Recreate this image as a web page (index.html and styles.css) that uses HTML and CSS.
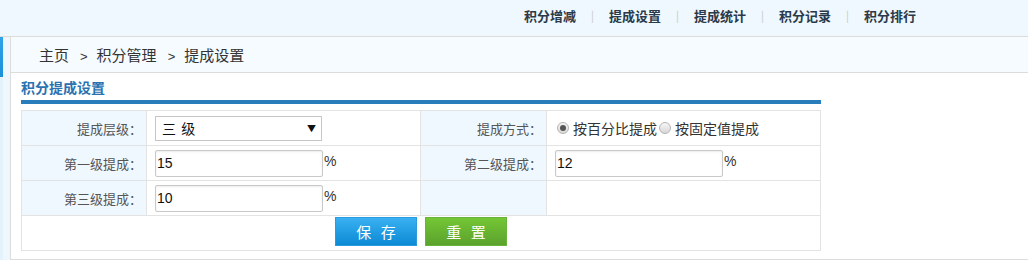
FILE: index.html
```html
<!DOCTYPE html>
<html lang="zh">
<head>
<meta charset="utf-8">
<title>提成设置</title>
<link rel="stylesheet" href="styles.css">
</head>
<body>
<div class="topbar">
  <nav class="nav">
    <a class="nav-item">积分增减</a><span class="sep">|</span>
    <a class="nav-item">提成设置</a><span class="sep">|</span>
    <a class="nav-item">提成统计</a><span class="sep">|</span>
    <a class="nav-item">积分记录</a><span class="sep">|</span>
    <a class="nav-item">积分排行</a>
  </nav>
</div>
<div class="main">
  <div class="gutter"><div class="gutter-bar"></div></div>
  <div class="panel">
    <div class="crumbs">主页<span class="gt">&gt;</span>积分管理<span class="gt">&gt;</span>提成设置</div>
    <div class="content">
      <div class="title">积分提成设置</div>
      <div class="rule"></div>
      <table class="form">
        <colgroup>
          <col class="c-lbl1"><col class="c-val1"><col class="c-lbl2"><col class="c-val2">
        </colgroup>
        <tr>
          <td class="lbl">提成层级：</td>
          <td class="val">
            <div class="select"><span class="sel-text">三 级</span><span class="arrow">▼</span></div>
          </td>
          <td class="lbl">提成方式：</td>
          <td class="val">
            <label class="radio"><span class="dot on"></span>按百分比提成</label><label class="radio"><span class="dot"></span>按固定值提成</label>
          </td>
        </tr>
        <tr>
          <td class="lbl">第一级提成：</td>
          <td class="val"><span class="input">15</span><span class="pct">%</span></td>
          <td class="lbl">第二级提成：</td>
          <td class="val"><span class="input">12</span><span class="pct">%</span></td>
        </tr>
        <tr>
          <td class="lbl">第三级提成：</td>
          <td class="val"><span class="input">10</span><span class="pct">%</span></td>
          <td class="lbl"></td>
          <td class="val"></td>
        </tr>
        <tr>
          <td class="actions" colspan="4">
            <div class="btns"><span class="btn blue">保 存</span><span class="btn green">重 置</span></div>
          </td>
        </tr>
      </table>
    </div>
  </div>
</div>
</body>
</html>
```
FILE: styles.css
```css
html, body { margin: 0; padding: 0; background: #fff; }
body {
  font-family: "Noto Sans CJK SC", "Liberation Sans", sans-serif;
  font-size: 13px;
  color: #333;
  width: 1028px;
  height: 260px;
  overflow: hidden;
}
.topbar {
  box-sizing: border-box;
  height: 37px;
  background: #eef8fe;
  border-bottom: 1px solid #dcdcdc;
}
.nav {
  display: flex;
  align-items: center;
  height: 30px;
  padding-left: 524px;
}
.nav-item {
  font-weight: bold;
  font-size: 13px;
  color: #2b3a4a;
  width: 52px;
  white-space: nowrap;
}
.sep {
  color: #c8c8c8;
  font-size: 11px;
  width: 33px;
  text-align: center;
}
.main {
  display: flex;
  height: 223px;
}
.gutter {
  width: 10px;
  background: linear-gradient(to right, #e4f2fc 0, #e4f2fc 3px, #eef7fd 3px);
}
.gutter-bar {
  width: 3px;
  height: 40px;
  background: linear-gradient(to bottom, #2ea3ea, #1b8fd8);
}
.panel {
  flex: 1;
  border-left: 1px solid #dcdcdc;
  border-bottom: 1px solid #dcdcdc;
  height: 222px;
}
.crumbs {
  height: 36px;
  box-sizing: border-box;
  background: #f5fbff;
  border-bottom: 1px solid #dcdcdc;
  padding-left: 28px;
  font-size: 15px;
  line-height: 35px;
  color: #333;
}
.gt { margin: 0 9px 0 11px; font-family: "Liberation Sans", sans-serif; font-size: 13px; }
.content {
  padding-left: 10px;
  width: 800px;
}
.title {
  height: 27px;
  line-height: 28px;
  font-weight: bold;
  font-size: 14px;
  color: #2a72b0;
}
.rule {
  height: 4px;
  background: #2a7dbb;
  margin-bottom: 6px;
}
.form {
  width: 799px;
  border-collapse: collapse;
  table-layout: fixed;
}
.c-lbl1 { width: 125px; }
.c-val1 { width: 274px; }
.c-lbl2 { width: 126px; }
.c-val2 { width: 274px; }
.form tr { height: 35px; }
.form td {
  border: 1px solid #e3e3e3;
  padding: 0;
}
.form td.lbl {
  background: #f0f8ff;
  text-align: right;
  color: #555;
  padding-right: 4px;
}
.form td.val {
  padding-left: 8px;
}
.select {
  display: flex;
  align-items: center;
  justify-content: space-between;
  width: 167px;
  height: 25px;
  box-sizing: border-box;
  border: 1px solid #c6c6c6;
  background: #fff;
  padding: 0 5px 0 6px;
}
.sel-text { font-size: 14px; color: #111; letter-spacing: 1px; }
.arrow { font-size: 9px; color: #111; }
.input {
  display: inline-block;
  vertical-align: middle;
  width: 168px;
  height: 27px;
  box-sizing: border-box;
  border: 1px solid #c9c9c9;
  border-radius: 2px;
  box-shadow: inset 0 1px 2px rgba(0,0,0,0.08);
  padding-left: 1px;
  font-family: "Liberation Sans", sans-serif;
  font-size: 14px;
  line-height: 25px;
  color: #111;
}
.pct {
  display: inline-block;
  vertical-align: middle;
  margin-left: 1px;
  margin-top: -4px;
  font-family: "Liberation Sans", sans-serif;
  font-size: 14px;
  color: #333;
}
.radio {
  display: inline-flex;
  align-items: center;
  font-size: 14px;
  color: #333;
}
.dot {
  width: 12px;
  height: 12px;
  box-sizing: border-box;
  border-radius: 50%;
  border: 1px solid #b5b5b5;
  background: linear-gradient(#f6f6f6, #d8d8d8);
  margin: 0 4px 0 2px;
  position: relative;
}
.dot.on::after {
  content: "";
  position: absolute;
  left: 2px;
  top: 2px;
  width: 6px;
  height: 6px;
  border-radius: 50%;
  background: #555;
}
.actions { padding: 0; }
.btns {
  display: flex;
  justify-content: center;
  gap: 8px;
  padding-top: 1px;
  height: 34px;
  box-sizing: border-box;
}
.btn {
  width: 82px;
  height: 29px;
  box-sizing: border-box;
  display: flex;
  align-items: center;
  justify-content: center;
  color: #fff;
  font-size: 15px;
  letter-spacing: 3px;
  text-indent: 3px;
}
.btn.blue {
  background: linear-gradient(#3ab0f2, #0b8ad4);
  border: 1px solid #2b9be0;
}
.btn.green {
  background: linear-gradient(#74c635, #5ba22d);
  border: 1px solid #68b338;
}
```
